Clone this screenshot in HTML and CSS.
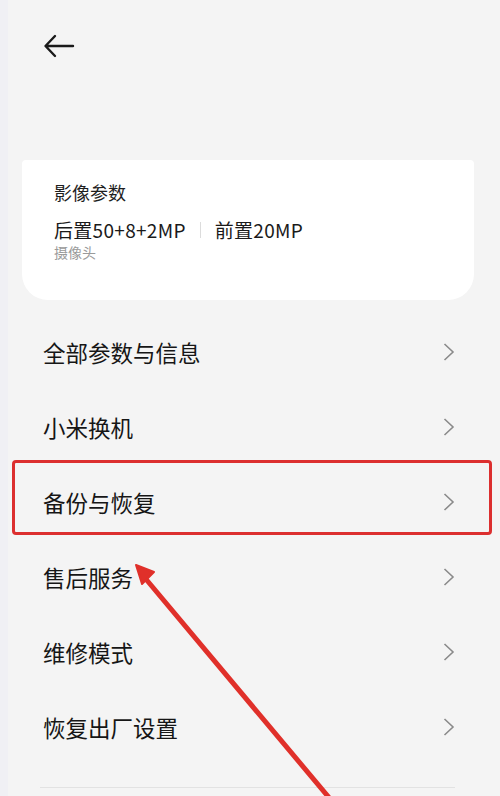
FILE: index.html
```html
<!DOCTYPE html>
<html lang="zh-CN">
<head>
<meta charset="utf-8">
<link rel="stylesheet" href="styles.css">
</head>
<body>
<div class="page">
  <header class="top">
    <svg class="back" width="32" height="24" viewBox="0 0 32 24">
      <path d="M30 12 H3 M12 2 L2.5 12 L12 22" fill="none" stroke="#1a1a1a" stroke-width="2.4" stroke-linecap="round" stroke-linejoin="round"/>
    </svg>
  </header>
  <section class="card">
    <div class="card-title">影像参数</div>
    <div class="specs">
      <span>后置50+8+2MP</span>
      <span class="sep"></span>
      <span>前置20MP</span>
    </div>
    <div class="sub">摄像头</div>
  </section>
  <ul class="list">
    <li class="item"><span>全部参数与信息</span><svg class="chev" width="12" height="18" viewBox="0 0 12 18"><path d="M1.5 1 L10 9 L1.5 17" fill="none" stroke="#8a8a8a" stroke-width="1.6"/></svg></li>
    <li class="item"><span>小米换机</span><svg class="chev" width="12" height="18" viewBox="0 0 12 18"><path d="M1.5 1 L10 9 L1.5 17" fill="none" stroke="#8a8a8a" stroke-width="1.6"/></svg></li>
    <li class="item"><span>备份与恢复</span><svg class="chev" width="12" height="18" viewBox="0 0 12 18"><path d="M1.5 1 L10 9 L1.5 17" fill="none" stroke="#8a8a8a" stroke-width="1.6"/></svg></li>
    <li class="item"><span>售后服务</span><svg class="chev" width="12" height="18" viewBox="0 0 12 18"><path d="M1.5 1 L10 9 L1.5 17" fill="none" stroke="#8a8a8a" stroke-width="1.6"/></svg></li>
    <li class="item"><span>维修模式</span><svg class="chev" width="12" height="18" viewBox="0 0 12 18"><path d="M1.5 1 L10 9 L1.5 17" fill="none" stroke="#8a8a8a" stroke-width="1.6"/></svg></li>
    <li class="item"><span>恢复出厂设置</span><svg class="chev" width="12" height="18" viewBox="0 0 12 18"><path d="M1.5 1 L10 9 L1.5 17" fill="none" stroke="#8a8a8a" stroke-width="1.6"/></svg></li>
  </ul>
  <div class="rule"></div>
  <div class="highlight"></div>
  <svg class="pointer" width="500" height="796" viewBox="0 0 500 796">
    <path d="M145 578 L331 800" stroke="#e0302a" stroke-width="5" stroke-linecap="round"/>
    <path d="M136 565 L154 572 L142 584 Z" fill="#e0302a" stroke="#e0302a" stroke-width="2" stroke-linejoin="round"/>
  </svg>
</div>
</body>
</html>
```

FILE: styles.css
```css
html, body {
  margin: 0;
  padding: 0;
}
body {
  background: #f4f4f4;
  font-family: "Noto Sans CJK SC", "Noto Sans", sans-serif;
  color: #1c1c1c;
  overflow: hidden;
}
.page {
  position: relative;
  width: 500px;
  height: 796px;
  overflow: hidden;
  background: #f4f4f4;
  border-left: 8px solid #f0f0f4;
  box-sizing: border-box;
}
.top {
  height: 160px;
  padding: 34px 0 0 35px;
  box-sizing: border-box;
}
.back {
  display: block;
}
.card {
  margin: 0 26px 0 14px;
  height: 140px;
  background: #ffffff;
  border-radius: 4px 4px 26px 26px;
  padding: 20px 0 0 32px;
  box-sizing: border-box;
}
.card-title {
  font-size: 18px;
  line-height: 24px;
  color: #1e1e1e;
}
.specs {
  margin-top: 15px;
  display: flex;
  align-items: center;
  font-size: 19px;
  line-height: 22px;
  color: #1a1a1a;
  letter-spacing: 0.3px;
}
.sep {
  width: 1px;
  height: 16px;
  background: #dcdcdc;
  margin: 0 14px 0 14px;
}
.sub {
  font-size: 14px;
  line-height: 18px;
  color: #9a9a9a;
  margin-top: 2px;
}
.list {
  list-style: none;
  margin: 0;
  padding: 14px 0 0 0;
}
.item {
  height: 75px;
  display: flex;
  align-items: center;
  justify-content: space-between;
  padding: 0 45px 0 35px;
  font-size: 22.5px;
  color: #161616;
}
.chev {
  display: block;
}
.rule {
  margin: 23px 45px 0 32px;
  height: 1px;
  background: #e2e2e2;
}
.highlight {
  position: absolute;
  left: 4px;
  top: 460px;
  width: 474px;
  height: 69px;
  border: 3px solid #dc2f2f;
  border-radius: 4px;
}
.pointer {
  position: absolute;
  left: -8px;
  top: 0;
}
```
